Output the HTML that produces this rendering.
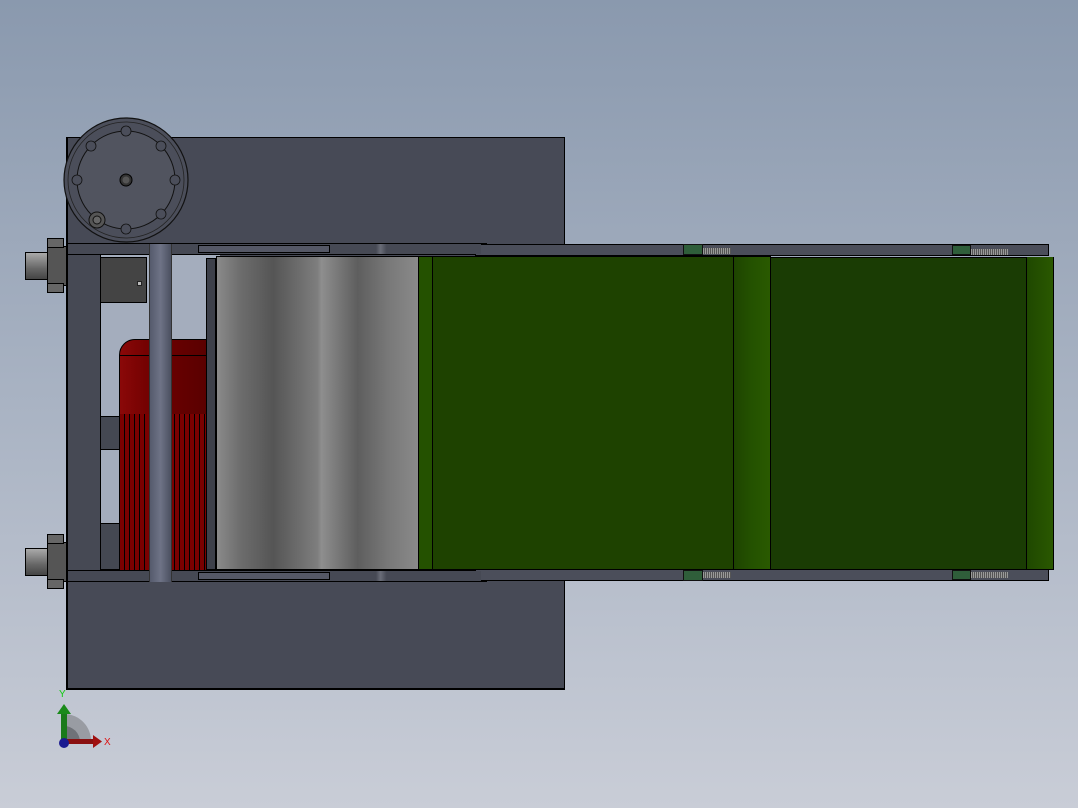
<!DOCTYPE html>
<html><head><style>
body{margin:0;width:1078px;height:808px;overflow:hidden;background:linear-gradient(#8a99ae,#a9b3c3 50%,#c9cdd7);position:relative;font-family:"Liberation Sans",sans-serif}
div{position:absolute;box-sizing:border-box}
.k{border:1px solid #000}
</style></head><body>
<div class="k" style="left:66px;top:137px;width:499px;height:553px;background:#474a56;border-width:1px 1px 2px 2px"></div>
<div style="left:100px;top:254px;width:120px;height:316px;background:#a4adbd"></div>
<div class="k" style="left:67px;top:244px;width:34px;height:338px;background:#464954"></div>
<div class="k" style="left:67px;top:570px;width:420px;height:12px;background:#464954"></div>
<div class="k" style="left:67px;top:243px;width:420px;height:12px;background:#464954"></div>
<div class="k" style="left:475px;top:244px;width:574px;height:12px;background:#4b4e5a"></div>
<div class="k" style="left:475px;top:569px;width:574px;height:12px;background:#4b4e5a"></div>
<div class="k" style="left:198px;top:245px;width:132px;height:8px;background:#555866"></div>
<div class="k" style="left:198px;top:572px;width:132px;height:8px;background:#555866"></div>
<div style="left:331px;top:244px;width:150px;height:10px;background:linear-gradient(90deg,#464954 0,#464954 30%,#6a6d78 33%,#464954 37%)"></div>
<div style="left:331px;top:571px;width:150px;height:10px;background:linear-gradient(90deg,#464954 0,#464954 30%,#6a6d78 33%,#464954 37%)"></div>
<div class="k" style="left:100px;top:257px;width:47px;height:46px;background:#444"></div>
<div style="left:137px;top:281px;width:5px;height:5px;background:#bbb;border:1px solid #222"></div>
<div class="k" style="left:100px;top:416px;width:20px;height:34px;background:#444852"></div>
<div class="k" style="left:100px;top:523px;width:20px;height:47px;background:#444852"></div>
<div class="k" style="left:119px;top:339px;width:88px;height:231px;background:linear-gradient(90deg,#8a0808,#6e0000 40%,#5a0000);border-radius:16px 0 0 0"></div>
<div style="left:120px;top:355px;width:86px;height:1px;background:#000"></div>
<div style="left:120px;top:414px;width:86px;height:156px;background:repeating-linear-gradient(90deg,#7a0000 0 4px,#000 4px 5px)"></div>
<div style="left:149px;top:244px;width:23px;height:338px;background:linear-gradient(90deg,#555a6c,#6e7386 50%,#4b5060);border-left:1px solid #333;border-right:1px solid #333"></div>
<div class="k" style="left:25px;top:252px;width:24px;height:28px;background:linear-gradient(#aaa,#666 60%,#444)"></div>
<div class="k" style="left:47px;top:246px;width:20px;height:40px;background:#555"></div>
<div class="k" style="left:47px;top:238px;width:17px;height:10px;background:#666"></div>
<div class="k" style="left:47px;top:283px;width:17px;height:10px;background:#666"></div>
<div class="k" style="left:25px;top:548px;width:24px;height:28px;background:linear-gradient(#aaa,#666 60%,#444)"></div>
<div class="k" style="left:47px;top:542px;width:20px;height:40px;background:#555"></div>
<div class="k" style="left:47px;top:534px;width:17px;height:10px;background:#666"></div>
<div class="k" style="left:47px;top:579px;width:17px;height:10px;background:#666"></div>
<div class="k" style="left:206px;top:258px;width:10px;height:312px;background:#3d404a"></div>
<div class="k" style="left:216px;top:256px;width:203px;height:314px;background:linear-gradient(90deg,#8a8a8a,#6c6c6c 12%,#555 28%,#7e7e7e 50%,#8e8e8e 52%,#5e5e5e 70%,#787878 85%,#8a8a8a)"></div>
<div class="k" style="left:418px;top:256px;width:316px;height:314px;background:#1e4200"></div>
<div style="left:419px;top:257px;width:14px;height:312px;background:#245100;border-right:1px solid #000"></div>
<div class="k" style="left:733px;top:256px;width:38px;height:314px;background:linear-gradient(90deg,#1e4400,#245200 50%,#2a5a00)"></div>
<div class="k" style="left:770px;top:257px;width:284px;height:313px;background:#1a3c04"></div>
<div style="left:1026px;top:257px;width:27px;height:312px;background:linear-gradient(90deg,#1f4800,#2a5800);border-left:1px solid #000"></div>
<div style="left:683px;top:244px;width:20px;height:11px;background:#2f5e3a;border:1px solid #111"></div>
<div style="left:683px;top:570px;width:20px;height:11px;background:#2f5e3a;border:1px solid #111"></div>
<div style="left:952px;top:245px;width:19px;height:10px;background:#2f5e3a;border:1px solid #111"></div>
<div style="left:952px;top:570px;width:19px;height:10px;background:#2f5e3a;border:1px solid #111"></div>
<div style="left:703px;top:248px;width:28px;height:6px;background:repeating-linear-gradient(90deg,#999 0 1px,#555 1px 2px)"></div>
<div style="left:703px;top:572px;width:28px;height:6px;background:repeating-linear-gradient(90deg,#999 0 1px,#555 1px 2px)"></div>
<div style="left:971px;top:249px;width:37px;height:6px;background:repeating-linear-gradient(90deg,#999 0 1px,#555 1px 2px)"></div>
<div style="left:971px;top:572px;width:37px;height:6px;background:repeating-linear-gradient(90deg,#999 0 1px,#555 1px 2px)"></div>
<svg style="position:absolute;left:0;top:0" width="1078" height="808">
<circle cx="126" cy="180" r="62" fill="#4b4e5a" stroke="#111" stroke-width="1.2"/>
<circle cx="126" cy="180" r="58" fill="none" stroke="#222" stroke-width="0.8"/>
<circle cx="126" cy="180" r="49" fill="#51545f" stroke="#111" stroke-width="1"/>
<g fill="#4b4e5a" stroke="#111" stroke-width="0.8">
<circle cx="126" cy="131" r="5"/><circle cx="161" cy="146" r="5"/><circle cx="175" cy="180" r="5"/><circle cx="161" cy="214" r="5"/><circle cx="126" cy="229" r="5"/><circle cx="91" cy="146" r="5"/><circle cx="77" cy="180" r="5"/>
</g>
<circle cx="126" cy="180" r="6" fill="#333" stroke="#000"/>
<circle cx="126" cy="180" r="3.5" fill="#555"/>
<circle cx="97" cy="220" r="8" fill="#555" stroke="#111"/>
<circle cx="97" cy="220" r="4" fill="#666" stroke="#111"/>
<path d="M64 742 v-28 a27 27 0 0 1 27 28z" fill="#999ca3"/>
<path d="M64 742 v-16 a16 16 0 0 1 16 16z" fill="#6f7278"/>
<rect x="61" y="712" width="6" height="30" fill="#1a7a1a"/>
<path d="M57 714 L64 704 L71 714Z" fill="#1a8a1a"/>
<rect x="64" y="739" width="30" height="5" fill="#8a1010"/>
<path d="M93 735 L102 741.5 L93 748Z" fill="#a01010"/>
<circle cx="64" cy="743" r="5" fill="#1a1a90"/>
<text x="59" y="697" font-size="10" fill="#1c1">Y</text>
<text x="104" y="745" font-size="10" fill="#d11">X</text>
</svg>
</body></html>
